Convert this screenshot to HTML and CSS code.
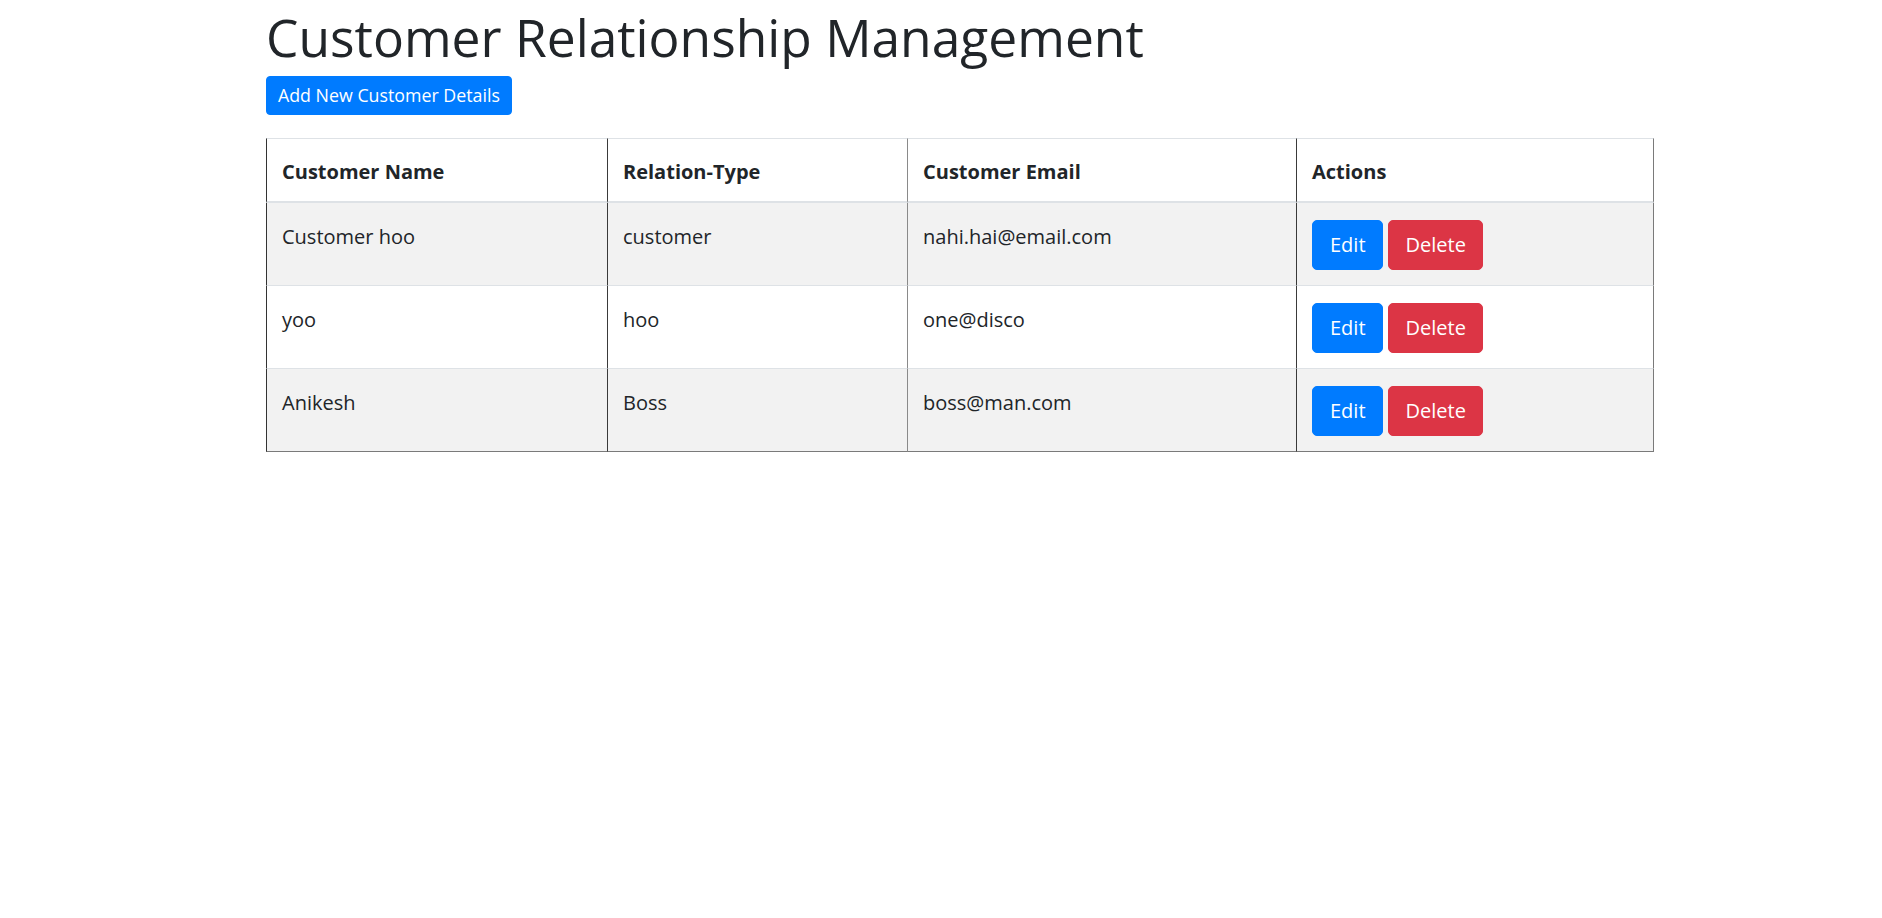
FILE: index.html
```html
<!DOCTYPE html>
<html lang="en">
<head>
<meta charset="utf-8">
<title>Customer Relationship Management</title>
<link rel="stylesheet" href="styles.css">
</head>
<body>
<div class="container">
  <h1 class="title">Customer Relationship Management</h1>
  <div class="toolbar">
    <button class="btn btn-sm btn-primary" type="button">Add New Customer Details</button>
  </div>
  <table class="crm-table">
    <thead>
      <tr>
        <th class="c1">Customer Name</th>
        <th class="c2">Relation-Type</th>
        <th class="c3">Customer Email</th>
        <th class="c4">Actions</th>
      </tr>
    </thead>
    <tbody>
      <tr class="odd">
        <td class="c1">Customer hoo</td>
        <td class="c2">customer</td>
        <td class="c3">nahi.hai@email.com</td>
        <td class="c4 action-cell"><div class="actions"><button class="btn btn-primary" type="button">Edit</button><button class="btn btn-danger" type="button">Delete</button></div></td>
      </tr>
      <tr>
        <td class="c1">yoo</td>
        <td class="c2">hoo</td>
        <td class="c3">one@disco</td>
        <td class="c4 action-cell"><div class="actions"><button class="btn btn-primary" type="button">Edit</button><button class="btn btn-danger" type="button">Delete</button></div></td>
      </tr>
      <tr class="odd">
        <td class="c1">Anikesh</td>
        <td class="c2">Boss</td>
        <td class="c3">boss@man.com</td>
        <td class="c4 action-cell"><div class="actions"><button class="btn btn-primary" type="button">Edit</button><button class="btn btn-danger" type="button">Delete</button></div></td>
      </tr>
    </tbody>
  </table>
</div>
</body>
</html>
```
FILE: styles.css
```css
* { box-sizing: border-box; }

html, body {
  margin: 0;
  padding: 0;
  background: #ffffff;
}

body {
  font-family: "Open Sans", "Noto Sans", "Liberation Sans", sans-serif;
  font-size: 20px;
  line-height: 30px;
  color: #212529;
}

.container {
  width: 1388px;
  margin-left: 266px;
}

.title {
  margin: 0 0 9px 0;
  padding-top: 7px;
  font-size: 51.5px;
  line-height: 60px;
  font-weight: 500;
  color: #212529;
}

.toolbar {
  margin-bottom: 23px;
}

.btn {
  display: inline-block;
  font-family: inherit;
  color: #ffffff;
  border: 1px solid transparent;
  cursor: pointer;
  font-weight: 400;
}

.btn-sm {
  font-size: 17.8px;
  line-height: 27px;
  padding: 5px 11px;
  border-radius: 4px;
}

.btn-primary {
  background: #007bff;
  border-color: #007bff;
}

.btn-danger {
  background: #dc3545;
  border-color: #dc3545;
}

.crm-table {
  width: 1388px;
  table-layout: fixed;
  border-collapse: separate;
  border-spacing: 0;
}

.crm-table th,
.crm-table td {
  text-align: left;
  vertical-align: top;
  padding: 19px 15px 13px 15px;
  border-left: 1px solid #3c3c3c;
}

.crm-table th {
  font-weight: 700;
  padding-top: 18px;
  padding-bottom: 14px;
  border-top: 1px solid #dee2e6;
  border-bottom: 2px solid #dee2e6;
  background: #ffffff;
}

.crm-table td {
  border-top: 1px solid #dee2e6;
}

.crm-table td.action-cell {
  padding-top: 17px;
  padding-bottom: 15px;
}

.crm-table tbody tr:first-child td {
  border-top: 0;
}

.crm-table tbody tr:last-child td {
  border-bottom: 1px solid #7a7a7a;
}

.crm-table .c1 { width: 341px; border-left-color: #333333; }
.crm-table .c2 { width: 300px; border-left-color: #3a3a3a; }
.crm-table .c3 { width: 389px; border-left-color: #8a8a8a; }
.crm-table .c4 { width: 358px; border-left-color: #3a3a3a; border-right: 1px solid #7a7a7a; }

.crm-table tr.odd td {
  background: #f2f2f2;
}

.actions {
  display: flex;
  gap: 5px;
}

.actions .btn {
  font-size: 20px;
  line-height: 48px;
  height: 50px;
  padding: 0 16px 0 17px;
  border-radius: 5px;
}
```
